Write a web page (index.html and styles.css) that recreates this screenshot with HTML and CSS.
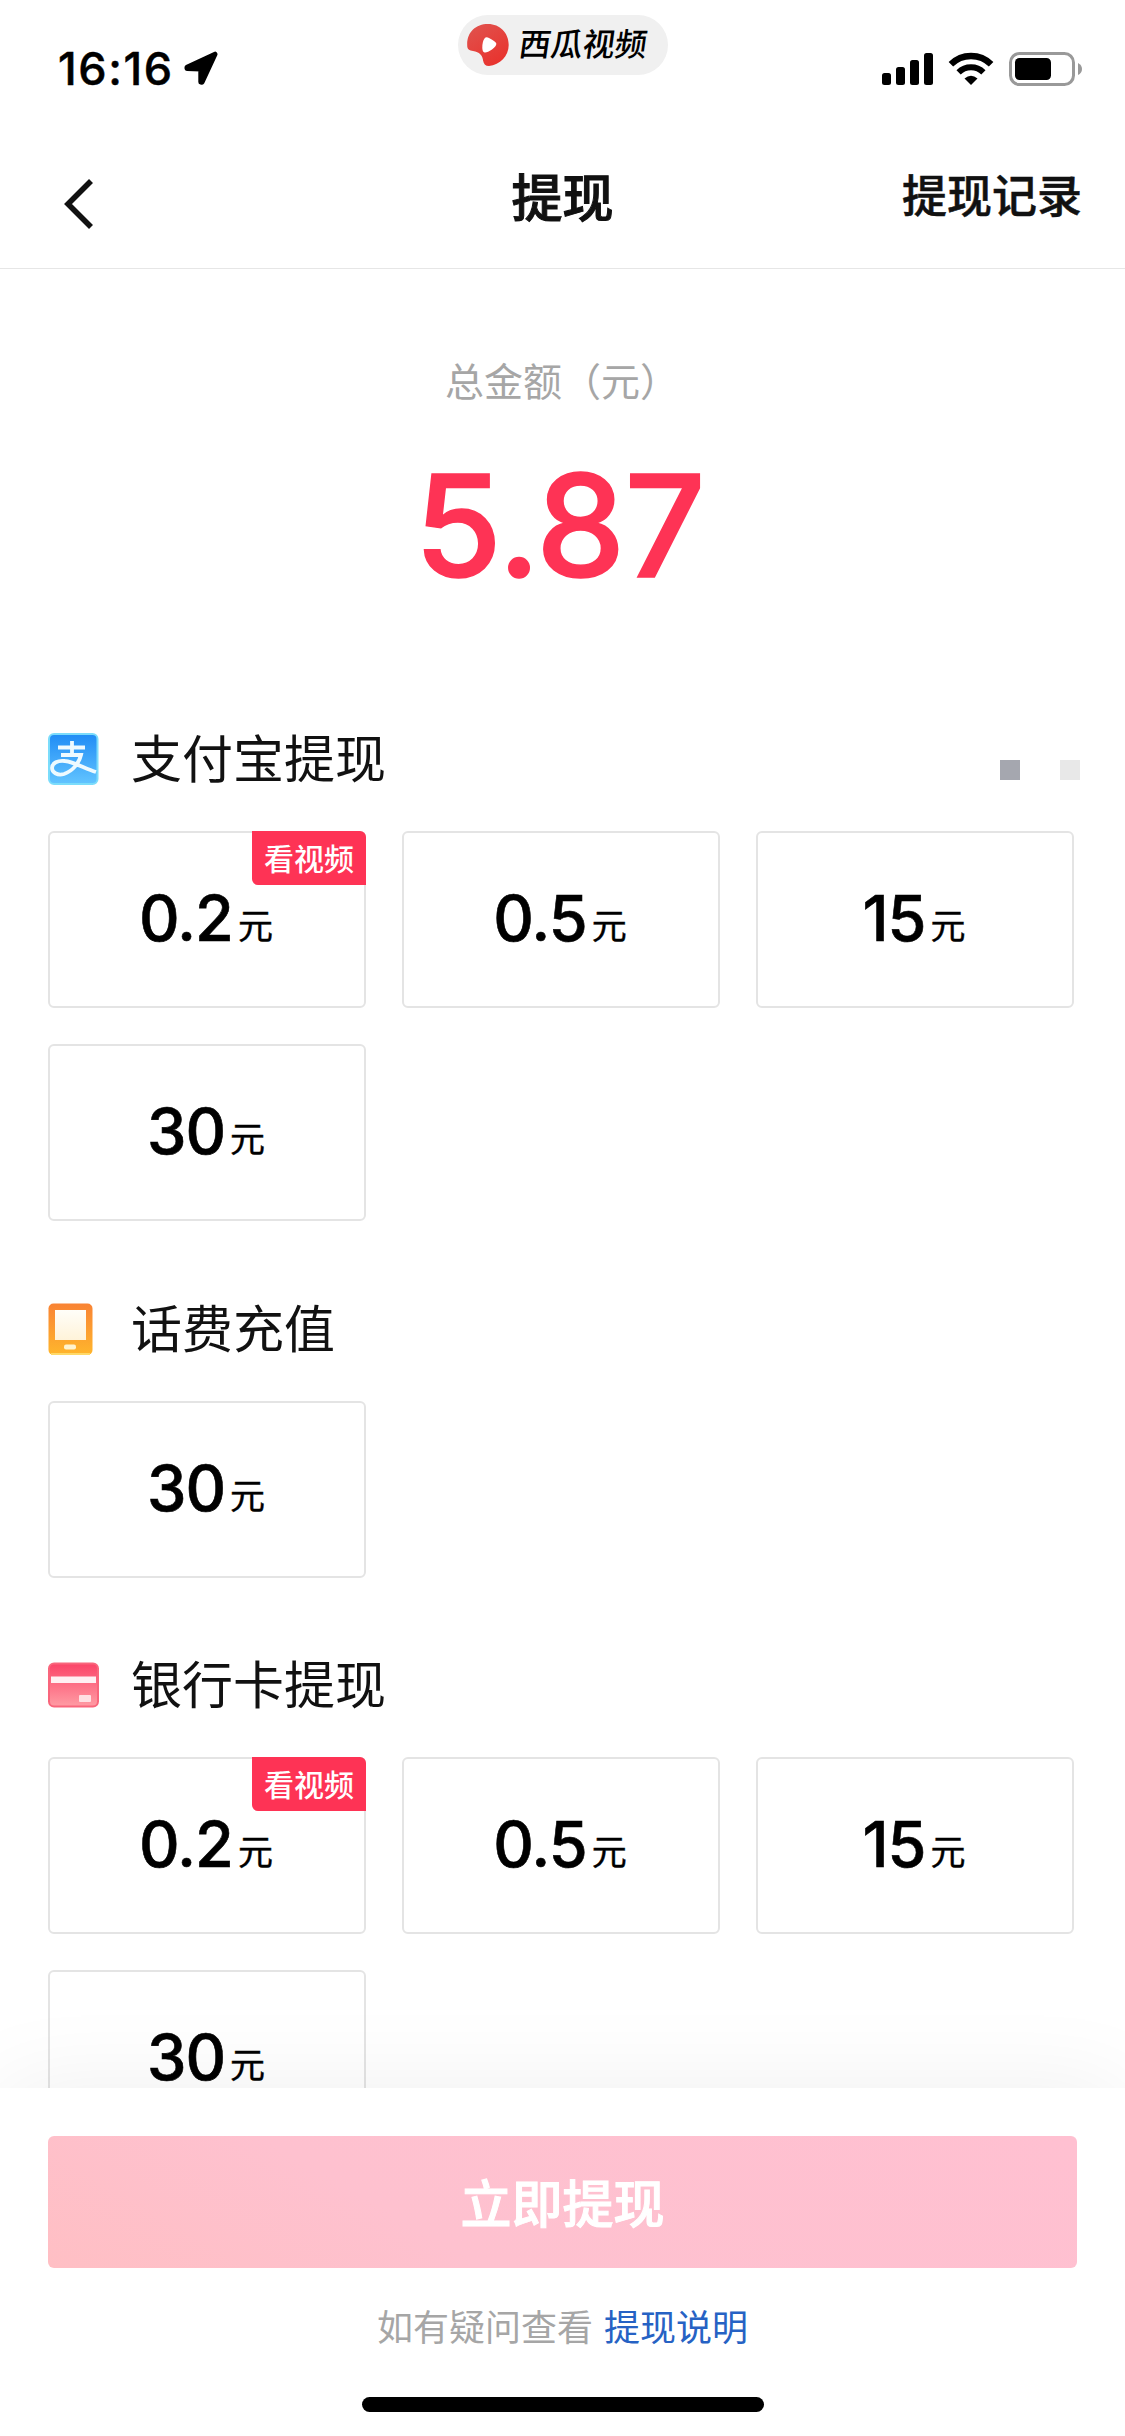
FILE: index.html
```html
<!DOCTYPE html>
<html lang="zh-CN">
<head>
  <meta charset="UTF-8">
  <title>提现</title>
  <link rel="stylesheet" href="styles.css">
</head>
<body>
  <div class="page">
    <div class="status-bar">
      <div class="status-left">
        <span class="time">16:16</span>
        <svg class="location" width="36" height="36" viewBox="0 0 36 36">
          <path d="M4 16.2 L32 3.2 L19 31.2 L17.8 31 L17.8 18 L4 17.4 Z" fill="#000" stroke="#000" stroke-width="5" stroke-linejoin="round"/>
        </svg>
      </div>
      <div class="app-pill">
        <svg width="42" height="42" viewBox="0 0 42 42">
          <defs>
            <linearGradient id="melon" x1="0" y1="0" x2="0.6" y2="1">
              <stop offset="0" stop-color="#e0544f"/>
              <stop offset="1" stop-color="#e8342f"/>
            </linearGradient>
          </defs>
          <path d="M0.3 23 C-1 9 8 0 21 0 C33 0 41.7 9 41.7 21 C41.7 32 33 41 22 42 C18.5 42 16.7 40 16.2 37 C15.5 31 12.500 28 6 27 C2.500 26.500 0.600 25.500 0.300 23 Z" fill="url(#melon)"/>
          <path d="M17.500 14.500 Q19 12.500 22 14 Q29 17.500 29.300 19.500 Q29.700 22 25 25.500 Q20 29 17.500 28.500 Q15.500 28 15.300 24 Q15.200 17.500 17.500 14.500 Z" fill="#fff"/>
        </svg>
        <span class="app-name">西瓜视频</span>
      </div>
      <div class="status-right">
        <svg width="52" height="34" viewBox="0 0 52 34">
          <rect x="0" y="21" width="9" height="12" rx="2.500"/>
          <rect x="14" y="15" width="9" height="18" rx="2.500"/>
          <rect x="28" y="8" width="9" height="25" rx="2.500"/>
          <rect x="42" y="1" width="9" height="32" rx="2.500"/>
        </svg>
        <svg width="46" height="34" viewBox="0 0 46 34">
          <path d="M2.900 12.300 A28.500 28.500 0 0 1 43.100 12.300" fill="none" stroke="#000" stroke-width="6.400"/>
          <path d="M10.600 20.300 A17.600 17.600 0 0 1 35.400 20.300" fill="none" stroke="#000" stroke-width="6"/>
          <path d="M16.500 26.500 Q23 21 29.500 26.500 L23 33 Z"/>
        </svg>
        <svg width="74" height="34" viewBox="0 0 74 34">
          <rect x="1.500" y="1.500" width="63" height="31" rx="9" fill="none" stroke="#999" stroke-width="3"/>
          <rect x="6" y="6" width="36" height="22" rx="4.500"/>
          <path d="M69 11 Q73 13 73 17 Q73 21 69 23 Z" fill="#999"/>
        </svg>
      </div>
    </div>

    <div class="nav">
      <svg class="back" width="32" height="52" viewBox="0 0 32 52">
        <path d="M27 3 L4 26 L27 49" fill="none" stroke="#111" stroke-width="5.600"/>
      </svg>
      <h1>提现</h1>
      <a class="record">提现记录</a>
    </div>

    <div class="content">
      <div class="total-label">总金额（元）</div>
      <div class="total">5.87</div>

      <div class="section">
        <div class="section-title">
          <svg width="52" height="54" viewBox="0 0 52 54">
            <defs>
              <linearGradient id="ali" x1="0" y1="0" x2="0" y2="1">
                <stop offset="0" stop-color="#208cf5"/>
                <stop offset="1" stop-color="#62c4ff"/>
              </linearGradient>
            </defs>
            <rect x="1" y="2" width="48.500" height="50" rx="5" fill="url(#ali)" stroke="#7bdcfb" stroke-width="2"/>
            <path d="M24 9 V22 M10 15.500 H37 M13 23 H33 C31 31 25 39 16 42 C9 44 4 40 4 36 C4 31 10 28 17 29 C26 30 36 36 48 40" fill="none" stroke="#eefaff" stroke-width="3.800"/>
          </svg>
          <h2>支付宝提现</h2>
          <div class="dots"><i class="on"></i><i></i></div>
        </div>
        <div class="cards">
          <div class="card"><b>0.2</b><span>元</span><em class="tag">看视频</em></div>
          <div class="card"><b>0.5</b><span>元</span></div>
          <div class="card"><b>15</b><span>元</span></div>
          <div class="card"><b>30</b><span>元</span></div>
        </div>
      </div>

      <div class="section">
        <div class="section-title">
          <svg width="52" height="54" viewBox="0 0 52 54">
            <defs>
              <linearGradient id="tel" x1="0" y1="0" x2="0" y2="1">
                <stop offset="0" stop-color="#f98334"/>
                <stop offset="1" stop-color="#ffb62c"/>
              </linearGradient>
              <linearGradient id="screen" x1="0" y1="0" x2="0" y2="1">
                <stop offset="0" stop-color="#fffef9"/>
                <stop offset="1" stop-color="#fff3d9"/>
              </linearGradient>
            </defs>
            <rect x="0.500" y="1.500" width="44" height="51.500" rx="5" fill="url(#tel)"/>
            <path d="M3 52 H42" stroke="#ffd968" stroke-width="2"/>
            <rect x="7" y="8" width="31" height="30" fill="url(#screen)"/>
            <rect x="16" y="42.500" width="12" height="5" rx="2" fill="#fff3cf"/>
          </svg>
          <h2>话费充值</h2>
        </div>
        <div class="cards">
          <div class="card"><b>30</b><span>元</span></div>
        </div>
      </div>

      <div class="section">
        <div class="section-title">
          <svg width="52" height="54" viewBox="0 0 52 54">
            <defs>
              <linearGradient id="bank" x1="0" y1="0" x2="0" y2="1">
                <stop offset="0" stop-color="#fb4468"/>
                <stop offset="1" stop-color="#ff9ca4"/>
              </linearGradient>
            </defs>
            <rect x="1" y="5.500" width="49" height="43" rx="5" fill="url(#bank)" stroke="#f9667c" stroke-width="2"/>
            <rect x="3" y="18.500" width="45" height="6.500" fill="#fff0f3"/>
            <rect x="31" y="37" width="12" height="7" rx="1" fill="#ffe0e3"/>
          </svg>
          <h2>银行卡提现</h2>
        </div>
        <div class="cards">
          <div class="card"><b>0.2</b><span>元</span><em class="tag">看视频</em></div>
          <div class="card"><b>0.5</b><span>元</span></div>
          <div class="card"><b>15</b><span>元</span></div>
          <div class="card"><b>30</b><span>元</span></div>
        </div>
      </div>
    </div>

    <div class="footer">
      <button class="submit">立即提现</button>
      <div class="help">如有疑问查看<a>提现说明</a></div>
      <div class="home-indicator"></div>
    </div>
  </div>
</body>
</html>
```
FILE: styles.css
```css
* {
  box-sizing: border-box;
}

body {
  margin: 0;
  background: #fff;
  color: #111;
  font-family: Inter, "Noto Sans CJK SC", sans-serif;
}

h1, h2 {
  margin: 0;
}

svg {
  display: block;
  flex: none;
}

.page {
  width: 1125px;
  height: 2436px;
  display: flex;
  flex-direction: column;
  overflow: hidden;
}

/* status bar */
.status-bar {
  height: 132px;
  display: grid;
  grid-template-columns: 1fr 210px 1fr;
  align-items: start;
}

.status-left {
  display: flex;
  padding: 43px 0 0 58px;
}

.time {
  width: 115px;
  font-size: 45px;
  font-weight: 500;
  line-height: 52px;
  letter-spacing: 1.6px;
  color: #000;
  -webkit-text-stroke: 0.5px #000;
  white-space: nowrap;
}

.location {
  margin: 8px 0 0 10px;
}

.app-pill {
  display: flex;
  align-items: center;
  gap: 10px;
  height: 60px;
  margin-top: 15px;
  padding-left: 9px;
  border-radius: 30px;
  background: #f0f0f0;
}

.app-name {
  font-size: 32px;
  font-weight: 500;
  line-height: 60px;
  color: #000;
  transform: skewX(-8deg);
}

.status-right {
  display: flex;
  justify-content: flex-end;
  padding: 52px 42px 0 0;
}

.status-right svg + svg {
  margin-left: 14px;
}

.status-right svg:last-child {
  margin-left: 15px;
}

/* nav */
.nav {
  height: 137px;
  display: grid;
  grid-template-columns: 1fr auto 1fr;
  align-items: start;
  padding: 31px 43px 0 64px;
  border-bottom: 1px solid #e6e6e6;
}

.back {
  margin-top: 15px;
}

.nav h1 {
  padding-right: 21px;
  font-size: 51px;
  font-weight: 500;
  line-height: 72px;
  -webkit-text-stroke: 1px #111;
}

.record {
  justify-self: end;
  font-size: 45px;
  font-weight: 500;
  line-height: 68px;
  -webkit-text-stroke: 0.5px #111;
}

/* content */
.content {
  flex: 1;
  overflow: hidden;
  padding: 0 45px 0 48px;
}

.total-label {
  margin: 83px 4px 0 0;
  text-align: center;
  font-size: 39px;
  line-height: 60px;
  color: #a6a6a6;
}

.total {
  margin: 30px 9px 0 0;
  text-align: center;
  font-size: 142px;
  font-weight: 500;
  line-height: 166px;
  letter-spacing: -1px;
  color: #fe3355;
  -webkit-text-stroke: 1.5px #fe3355;
}

.section {
  margin-bottom: 73.5px;
}

.total + .section {
  margin-top: 117px;
}

.section-title {
  display: flex;
  align-items: center;
  height: 70px;
  margin-bottom: 36px;
}

.section-title svg {
  margin-bottom: 2px;
}

.section-title h2 {
  margin-left: 31px;
  font-size: 51px;
  font-weight: 400;
  line-height: 70px;
}

.dots {
  display: flex;
  gap: 40px;
  margin: 20px 0 0 auto;
}

.dots i {
  width: 20px;
  height: 20px;
  background: #e8e8e8;
}

.dots .on {
  background: #a5a7af;
}

.cards {
  display: grid;
  grid-template-columns: repeat(3, 318px);
  grid-auto-rows: 177px;
  gap: 36px;
}

.card {
  position: relative;
  display: flex;
  justify-content: center;
  align-items: baseline;
  padding: 47px 2px 0 0;
  border: 2px solid #e4e4e4;
  border-radius: 6px;
  color: #000;
}

.card b {
  font-size: 63px;
  font-weight: 500;
  line-height: 76px;
  letter-spacing: -1px;
  -webkit-text-stroke: 0.6px #000;
}

.card span {
  margin: 0 0 2px 5px;
  font-size: 35px;
  line-height: 50px;
  transform: translateY(-2px);
  -webkit-text-stroke: 0.4px #000;
}

.tag {
  position: absolute;
  top: -2px;
  right: -2px;
  width: 114px;
  height: 54px;
  border-radius: 0 6px 0 6px;
  background: #fe3355;
  color: #fff;
  font-size: 30px;
  font-style: normal;
  font-weight: 500;
  line-height: 57px;
  text-align: center;
}

/* footer */
.footer {
  height: 348px;
  flex: none;
  display: flex;
  flex-direction: column;
  align-items: center;
  padding: 48px 48px 0;
  background: #fff;
  box-shadow: 0 0 90px rgba(0, 0, 0, 0.065);
  z-index: 1;
}

.submit {
  width: 100%;
  height: 132px;
  padding-bottom: 3px;
  border: none;
  border-radius: 6px;
  background: linear-gradient(30deg, #ffbfc4 0%, #fec1cf 35%, #ffc0d1 100%);
  color: #fff;
  font-family: inherit;
  font-size: 51px;
  font-weight: 500;
  -webkit-text-stroke: 1px #fff;
}

.help {
  margin-top: 33px;
  font-size: 36px;
  line-height: 54px;
  color: #a6a6a6;
}

.help a {
  margin-left: 11px;
  color: #2662c4;
}

.home-indicator {
  width: 402px;
  height: 15px;
  margin-top: 42px;
  border-radius: 8px;
  background: #000;
}
```
